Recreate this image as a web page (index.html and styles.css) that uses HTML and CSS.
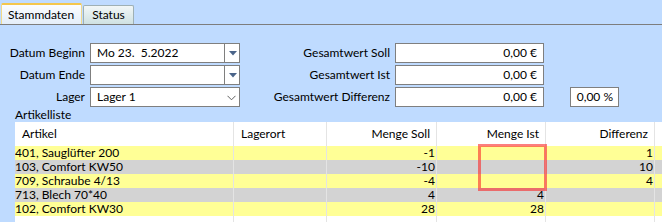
FILE: index.html
```html
<!DOCTYPE html>
<html lang="de">
<head>
<meta charset="utf-8">
<title>Stammdaten</title>
<link rel="stylesheet" href="styles.css">
</head>
<body>
<div class="tabs">
  <div class="tab active">Stammdaten</div>
  <div class="tab">Status</div>
</div>
<div class="form">
  <label class="lbl">Datum Beginn</label>
  <div class="box combo"><span class="val">Mo 23.&nbsp; 5.2022</span><span class="btn"><svg width="8" height="5" viewBox="0 0 8 5"><path d="M0 0H8L4 4.5Z" fill="#4a6489"/></svg></span></div>
  <label class="lbl">Gesamtwert Soll</label>
  <div class="box num">0,00 €</div>
  <div class="empty"></div>

  <label class="lbl">Datum Ende</label>
  <div class="box combo"><span class="val"></span><span class="btn"><svg width="8" height="5" viewBox="0 0 8 5"><path d="M0 0H8L4 4.5Z" fill="#4a6489"/></svg></span></div>
  <label class="lbl">Gesamtwert Ist</label>
  <div class="box num">0,00 €</div>
  <div class="empty"></div>

  <label class="lbl">Lager</label>
  <div class="box combo"><span class="val">Lager 1</span><span class="chev"><svg width="9" height="6" viewBox="0 0 9 6"><path d="M0.5 0.8L4.5 4.8L8.5 0.8" fill="none" stroke="#606060" stroke-width="1"/></svg></span></div>
  <label class="lbl">Gesamtwert Differenz</label>
  <div class="box num">0,00 €</div>
  <div class="box num pct">0,00 %</div>
</div>
<div class="caption">Artikelliste</div>
<div class="grid">
  <div class="row head">
    <div class="c">Artikel</div>
    <div class="c">Lagerort</div>
    <div class="c r">Menge Soll</div>
    <div class="c r">Menge Ist</div>
    <div class="c r">Differenz</div>
    <div class="c fill"></div>
  </div>
  <div class="row y">
    <div class="c">401, Sauglüfter 200</div><div class="c"></div><div class="c r">-1</div><div class="c r"></div><div class="c r">1</div><div class="c fill"></div>
  </div>
  <div class="row g">
    <div class="c">103, Comfort KW50</div><div class="c"></div><div class="c r">-10</div><div class="c r"></div><div class="c r">10</div><div class="c fill"></div>
  </div>
  <div class="row y">
    <div class="c">709, Schraube 4/13</div><div class="c"></div><div class="c r">-4</div><div class="c r"></div><div class="c r">4</div><div class="c fill"></div>
  </div>
  <div class="row g">
    <div class="c">713, Blech 70*40</div><div class="c"></div><div class="c r">4</div><div class="c r">4</div><div class="c r"></div><div class="c fill"></div>
  </div>
  <div class="row y">
    <div class="c">102, Comfort KW30</div><div class="c"></div><div class="c r">28</div><div class="c r">28</div><div class="c r"></div><div class="c fill"></div>
  </div>
  <div class="row blank">
    <div class="c"></div><div class="c"></div><div class="c"></div><div class="c"></div><div class="c"></div><div class="c fill"></div>
  </div>
  <div class="mark"></div>
</div>
</body>
</html>
```
FILE: styles.css
```css
* { box-sizing: border-box; }
html, body { margin: 0; padding: 0; }
body {
  width: 662px;
  height: 222px;
  overflow: hidden;
  background: #bfdbff;
  font-family: Lato, "Noto Sans", sans-serif;
  font-size: 12px;
  color: #000;
}
.tabs {
  display: flex;
  align-items: flex-end;
  height: 25px;
  padding-left: 1px;
  border-bottom: 1px solid #7d7d7d;
}
.tab {
  height: 19px;
  padding: 0 8px;
  margin-right: 1px;
  line-height: 17px;
  border: 1px solid #9fb0b4;
  border-bottom: none;
  border-radius: 2px 2px 0 0;
  background: linear-gradient(#f2f7f7, #cfe1e2);
}
.tab.active {
  height: 21px;
  line-height: 19px;
  padding: 0 7px 0 6px;
  border-color: #f1d98a;
  border-top: 2px solid #f4c64c;
  background: linear-gradient(#fbfcfe, #e4eef9);
}
.form {
  display: grid;
  grid-template-columns: 85px 150px 145px 149px 70px;
  grid-template-rows: repeat(3, 20px);
  column-gap: 5px;
  row-gap: 2px;
  margin-top: 18px;
}
.lbl {
  text-align: right;
  line-height: 20px;
  white-space: nowrap;
}
.box {
  background: #fff;
  border: 1px solid #7f7f7f;
  line-height: 18px;
  white-space: nowrap;
}
.combo {
  display: flex;
}
.combo .val {
  flex: 1;
  padding-left: 6px;
}
.combo .btn {
  width: 15px;
  border-left: 1px solid #7f7f7f;
  display: flex;
  align-items: center;
  justify-content: center;
  padding-left: 1px;
}
.combo .chev {
  width: 15px;
  display: flex;
  align-items: center;
  justify-content: center;
  padding-top: 1px;
}
.num {
  text-align: right;
  padding-right: 6px;
}
.pct {
  margin-left: 21px;
  padding-right: 5px;
}
.caption {
  height: 15px;
  line-height: 15px;
  padding-left: 15px;
}
.grid {
  position: relative;
  margin-left: 15px;
}
.row {
  display: grid;
  grid-template-columns: 219px 93px 110px 109px 109px 1fr;
  height: 14px;
  line-height: 14px;
}
.row.head {
  height: 24px;
  line-height: 24px;
  background: #fff;
}
.row.head .c { padding: 0 6px 0 7px; }
.row.head .c.r { padding-right: 6px; }
.row.y { background: #ffff96; }
.row.g { background: #d3d3d3; }
.row.blank { background: #fff; height: 10px; }
.c {
  border-right: 1px solid #e4e4e4;
  white-space: nowrap;
  overflow: hidden;
}
.c.r {
  text-align: right;
  padding-right: 1px;
}
.c.fill { border-right: none; }
.mark {
  position: absolute;
  left: 463px;
  top: 22px;
  width: 69px;
  height: 47px;
  border: 3px solid rgba(250, 40, 40, 0.6);
}
```
